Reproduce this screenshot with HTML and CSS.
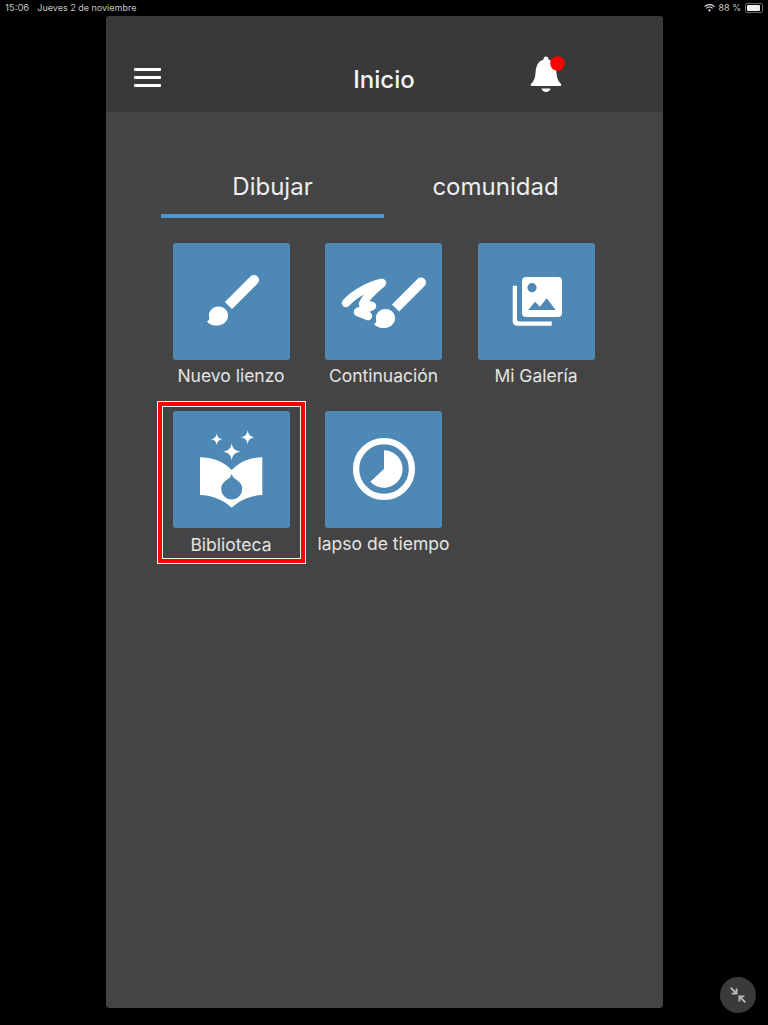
FILE: index.html
```html
<!DOCTYPE html>
<html lang="es">
<head>
    <meta charset="UTF-8">
    <meta name="viewport" content="width=device-width, initial-scale=1.0">
    <title>Inicio</title>
    <link rel="stylesheet" href="styles.css">
</head>
<body>
    <div class="status-bar">
        <div class="status-left">
            <span>15:06</span>
            <span class="status-date">Jueves 2 de noviembre</span>
        </div>
        <div class="status-right">
            <svg class="wifi-icon" viewBox="0 0 16 12">
                <path d="M8 11.500 5.800 9.100a3.200 3.200 0 0 1 4.400 0ZM3.900 7.200 2.700 5.900a7.800 7.800 0 0 1 10.600 0l-1.200 1.300a6 6 0 0 0-8.200 0ZM1.300 4.500 0 3.200a11.600 11.600 0 0 1 16 0l-1.300 1.300a9.800 9.800 0 0 0-13.400 0Z"/>
            </svg>
            <span>88 %</span>
            <div class="battery"><div class="battery-level"></div></div>
        </div>
    </div>

    <div class="panel">
        <header class="panel-header">
            <div class="menu-icon">
                <span></span>
                <span></span>
                <span></span>
            </div>
            <h1 class="panel-title">Inicio</h1>
            <svg class="bell-icon" viewBox="0 0 40 40">
                <path class="bell-body" d="M17.500 6.500C17.500 4.500 18.500 3.500 20 3.500s2.500 1 2.500 3C28.500 8.500 30 13.500 30.500 20c.4 5 1.500 8 4.500 11 .7.8.4 2-.8 2H5.800c-1.200 0-1.500-1.200-.8-2 3-3 4.100-6 4.500-11 .5-6.500 2-11.500 8-13.500Z"/>
                <path class="bell-body" d="M15.500 35.500h9c-.5 2-2.300 3.500-4.500 3.500s-4-1.500-4.500-3.500Z"/>
                <circle class="bell-dot" cx="31.500" cy="10.500" r="7.300"/>
            </svg>
        </header>

        <nav class="tabs">
            <div class="tab tab-active">Dibujar</div>
            <div class="tab">comunidad</div>
        </nav>

        <div class="tile-grid">
            <div class="tile">
                <div class="tile-box">
                    <svg viewBox="0 0 117 117">
                        <path class="stroke-butt" d="M55.500 62.500 79 39"/>
                        <path class="stroke-round" d="M79 39 81 37"/>
                        <path class="fill-white" d="M45.500 63.500C51.500 63.500 55.500 68 55 73.500 54.500 79.500 48.500 83 42 82.500 39 82.300 36 81 34 78.500 36.500 77.500 36.500 75.500 36 73.500 35.500 68 39.500 63.500 45.500 63.500Z"/>
                    </svg>
                </div>
                <span class="tile-label">Nuevo lienzo</span>
            </div>

            <div class="tile">
                <div class="tile-box">
                    <svg viewBox="0 0 117 117">
                        <path class="stroke-butt" d="M70.500 65 94 41.500"/>
                        <path class="stroke-round" d="M94 41.500 96 39.500"/>
                        <path class="fill-white" d="M60.500 66C66.500 66 70.500 70.500 70 76 69.500 82 63.500 85.500 57 85 54 84.800 51 83.500 49 81 51.500 80 51.500 78 51 76 50.500 70.500 54.500 66 60.500 66Z"/>
                        <path class="scribble" d="M21 60C30 50 46 42 57 40 50 46 42 52 38 61L47 63 33 69 43 73"/>
                    </svg>
                </div>
                <span class="tile-label">Continuación</span>
            </div>

            <div class="tile">
                <div class="tile-box">
                    <svg viewBox="0 0 117 117">
                        <rect class="fill-white" x="44" y="34" width="40" height="40" rx="4"/>
                        <circle class="fill-blue" cx="54" cy="44.700" r="4.600"/>
                        <path class="fill-blue" d="M50.300 67 57 58.700 62 63.700 68.700 55.300 77.700 67Z"/>
                        <path class="fill-white" d="M34.700 42.700H39V76C39 77.500 40 78.400 41.500 78.400H73.700V82.700H39C36.500 82.700 34.700 80.900 34.700 78.400Z"/>
                    </svg>
                </div>
                <span class="tile-label">Mi Galería</span>
            </div>

            <div class="tile tile-marked">
                <div class="tile-box">
                    <svg viewBox="0 0 117 117">
                        <path class="fill-white" d="M43.700 22.300C44.200 26 45.500 27.400 49.700 28.300 45.500 29.200 44.200 30.600 43.700 34.300 43.200 30.600 41.900 29.200 37.700 28.300 41.900 27.400 43.200 26 43.700 22.300Z"/>
                        <path class="fill-white" d="M74.700 19C75.300 23.500 77 25.500 82 26.300 77 27.100 75.300 29.100 74.700 33.600 74.100 29.100 72.400 27.100 67.400 26.300 72.400 25.500 74.100 23.500 74.700 19Z"/>
                        <path class="fill-white" d="M58.700 32C59.500 37.500 61.500 39.500 67.400 40.700 61.500 41.900 59.500 43.900 58.700 49.400 57.900 43.900 55.900 41.900 50 40.700 55.900 39.500 57.900 37.500 58.700 32Z"/>
                        <path class="fill-white" d="M27 46.300C39 46.500 50 50 58.700 59 67.400 50 78.400 46.500 89.300 46.300V84C77 84.500 67 89 58.700 96.700 50.400 89 40 84.500 27 84Z"/>
                        <path class="fill-blue" d="M58.700 63C59.500 66 61.500 67.500 64.500 69.500 68 72 69.500 75 69.200 78.500 68.700 84 64.500 88.500 58.700 88.500S48.700 84 48.200 78.500C47.900 75 49.400 72 52.900 69.500 55.900 67.500 57.900 66 58.700 63Z"/>
                    </svg>
                </div>
                <span class="tile-label">Biblioteca</span>
                <div class="tile-highlight"></div>
            </div>

            <div class="tile">
                <div class="tile-box">
                    <svg viewBox="0 0 117 117">
                        <circle class="ring" cx="59" cy="58" r="27.900"/>
                        <path class="fill-white" d="M59 58V39.300A18.700 18.700 0 1 1 45.300 70.800Z"/>
                    </svg>
                </div>
                <span class="tile-label">lapso de tiempo</span>
            </div>
        </div>
    </div>

    <div class="shrink-button">
        <svg viewBox="0 0 24 24">
            <path d="M4 4 10.500 10.500M10.500 5V10.500H5"/>
            <path d="M20 20 13.500 13.500M13.500 19V13.500H19"/>
        </svg>
    </div>
</body>
</html>
```

FILE: styles.css
```css
body {
    font-family: Inter, Roboto, sans-serif;
    margin: 0;
    background: #000;
    color: #eee;
    height: 1025px;
    position: relative;
    overflow: hidden;
}

.status-bar {
    display: flex;
    justify-content: space-between;
    align-items: center;
    height: 15px;
    padding: 0 5px;
    font-size: 9.500px;
    color: #c4c4c4;
}

.status-left {
    display: flex;
    gap: 8px;
}

.status-date {
    font-size: 9px;
}

.status-right {
    display: flex;
    align-items: center;
    gap: 3px;
    font-size: 9px;
}

.wifi-icon {
    width: 11px;
    height: 8px;
    fill: #ddd;
}

.battery {
    width: 14px;
    height: 6px;
    margin-left: 1px;
    padding: 1px;
    border: 1px solid #666;
    border-radius: 2px;
}

.battery-level {
    width: 90%;
    height: 100%;
    background: #eee;
    border-radius: 1px;
}

.panel {
    width: 557px;
    height: 992px;
    margin: 1px auto 0;
    background: #444;
    border-radius: 4px;
    overflow: hidden;
}

.panel-header {
    display: grid;
    grid-template-columns: 1fr auto 1fr;
    align-items: center;
    height: 96px;
    background: #393939;
    box-sizing: border-box;
}

.menu-icon {
    display: flex;
    flex-direction: column;
    gap: 5px;
    width: 27px;
    margin-left: 28px;
    padding-top: 27px;
}

.menu-icon span {
    display: block;
    height: 3px;
    background: #fff;
    border-radius: 1px;
}

.panel-title {
    margin: 30px 0 0;
    font-size: 24px;
    font-weight: 500;
    color: #f4f4f4;
}

.bell-icon {
    width: 40px;
    height: 40px;
    margin: 18px 0 0 111.500px;
}

.bell-body {
    fill: #fff;
}

.bell-dot {
    fill: #f00;
}

.tabs {
    display: flex;
    width: 446px;
    margin: 50px auto 0;
}

.tab {
    flex: 1;
    height: 56px;
    line-height: 50px;
    text-align: center;
    font-size: 24px;
    color: #eee;
    box-sizing: border-box;
}

.tab-active {
    border-bottom: 4px solid #4c94cc;
}

.tile-grid {
    display: grid;
    grid-template-columns: repeat(3, 152.500px);
    grid-auto-rows: 168px;
    justify-content: center;
    margin-top: 25px;
    padding-right: 1px;
}

.tile {
    display: flex;
    flex-direction: column;
    align-items: center;
    position: relative;
}

.tile-box {
    width: 117px;
    height: 117px;
    background: #4e88b4;
    border-radius: 3px;
}

.tile-box svg {
    display: block;
    width: 117px;
    height: 117px;
}

.tile-label {
    margin-top: 5px;
    font-size: 17.500px;
    line-height: 22px;
    color: #e4e4e4;
    white-space: nowrap;
}

.tile-marked .tile-label {
    margin-top: 6px;
}

.tile-highlight {
    position: absolute;
    top: -10px;
    left: 0;
    width: 149px;
    height: 163px;
    margin-left: 2px;
    box-sizing: border-box;
    border: 1px solid #eee;
}

.tile-highlight::after {
    content: "";
    position: absolute;
    inset: 0;
    border: 4px solid #f00;
    box-shadow: inset 0 0 0 1px #eee;
}

.fill-white {
    fill: #fff;
}

.fill-blue {
    fill: #4e88b4;
}

.stroke-butt {
    fill: none;
    stroke: #fff;
    stroke-width: 10;
}

.stroke-round {
    fill: none;
    stroke: #fff;
    stroke-width: 10;
    stroke-linecap: round;
}

.scribble {
    fill: none;
    stroke: #fff;
    stroke-width: 8.500;
    stroke-linecap: round;
    stroke-linejoin: round;
}

.ring {
    fill: none;
    stroke: #fff;
    stroke-width: 6.300;
}

.shrink-button {
    position: absolute;
    left: 720px;
    top: 977px;
    display: flex;
    align-items: center;
    justify-content: center;
    width: 36px;
    height: 36px;
    border-radius: 50%;
    background: #3a3a3a;
}

.shrink-button svg {
    width: 22px;
    height: 22px;
    fill: none;
    stroke: #bbb;
    stroke-width: 2;
}
```
